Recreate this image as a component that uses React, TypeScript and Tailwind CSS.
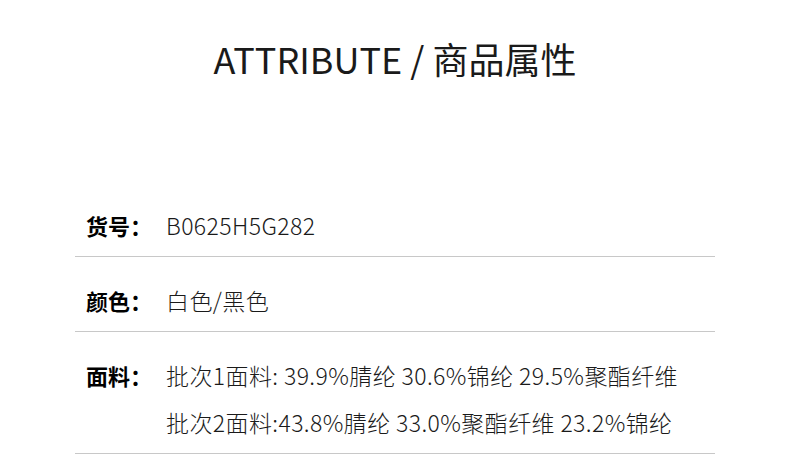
const font = { fontFamily: '"Noto Sans CJK SC", "Noto Sans", sans-serif' };

const rows = [
  { label: "货号：", values: ["B0625H5G282"] },
  { label: "颜色：", values: ["白色/黑色"] },
  {
    label: "面料：",
    values: [
      "批次1面料: 39.9%腈纶 30.6%锦纶 29.5%聚酯纤维",
      "批次2面料:43.8%腈纶 33.0%聚酯纤维 23.2%锦纶",
    ],
  },
];

export default function App() {
  return (
    <div
      className="w-[790px] h-[471px] bg-white text-[#1a1a1a] overflow-hidden"
      style={font}
    >
      <h1 className="pt-[34px] text-center text-[36px] leading-[48px] font-normal">
        ATTRIBUTE / 商品属性
      </h1>

      <div className="mt-[100px] mx-[75px]">
        {rows.map((row) => (
          <div
            key={row.label}
            className="flex border-b border-[#c8c8c8] pt-[20px] pb-[7px]"
          >
            <div className="w-[91px] shrink-0 pl-[11px] text-[22px] font-bold leading-[47px] text-black whitespace-nowrap">
              {row.label}
            </div>
            <div className="flex flex-col">
              {row.values.map((v) => (
                <div
                  key={v}
                  className="text-[23px] leading-[47px] font-light tracking-[0.4px] whitespace-nowrap"
                >
                  {v}
                </div>
              ))}
            </div>
          </div>
        ))}
      </div>
    </div>
  );
}
